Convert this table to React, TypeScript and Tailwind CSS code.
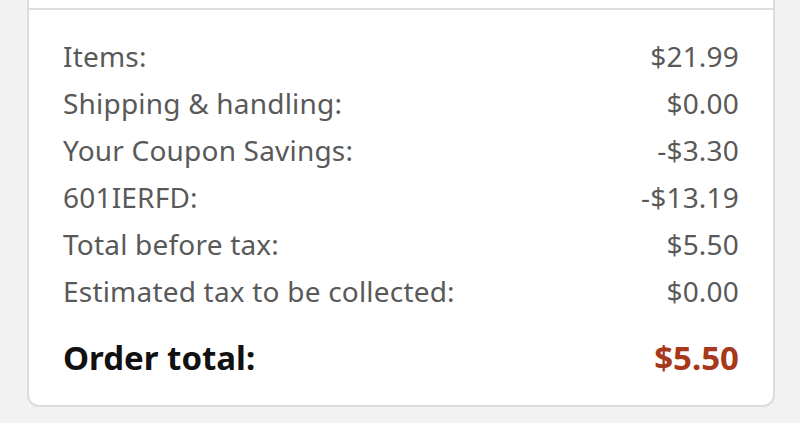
const rows: [string, string][] = [
  ["Items:", "$21.99"],
  ["Shipping & handling:", "$0.00"],
  ["Your Coupon Savings:", "-$3.30"],
  ["601IERFD:", "-$13.19"],
  ["Total before tax:", "$5.50"],
  ["Estimated tax to be collected:", "$0.00"],
];

export default function App() {
  return (
    <div
      className="h-[423px] w-[800px] overflow-hidden bg-[#f2f2f2] pl-[27px] pr-[25px]"
      style={{ fontFamily: '"Noto Sans", "Open Sans", sans-serif' }}
    >
      <div className="rounded-b-[12px] border-2 border-t-0 border-[#dcdcdc] bg-white">
        {/* previous section, cut off at the top */}
        <div className="h-[10px] border-b-2 border-[#dcdcdc]" />

        <div className="px-[34px] pt-[22px] pb-[22px]">
          <div className="flex flex-col">
            {rows.map(([label, value]) => (
              <div
                key={label}
                className="flex h-[47px] items-center justify-between text-[28px] tracking-[0.2px] text-[#595959]"
              >
                <span>{label}</span>
                <span>{value}</span>
              </div>
            ))}
          </div>
          <div className="mt-[19px] flex items-center justify-between text-[33px] font-bold">
            <span className="text-[#111111]">Order total:</span>
            <span className="text-[#a8381c]">$5.50</span>
          </div>
        </div>
      </div>
    </div>
  );
}
